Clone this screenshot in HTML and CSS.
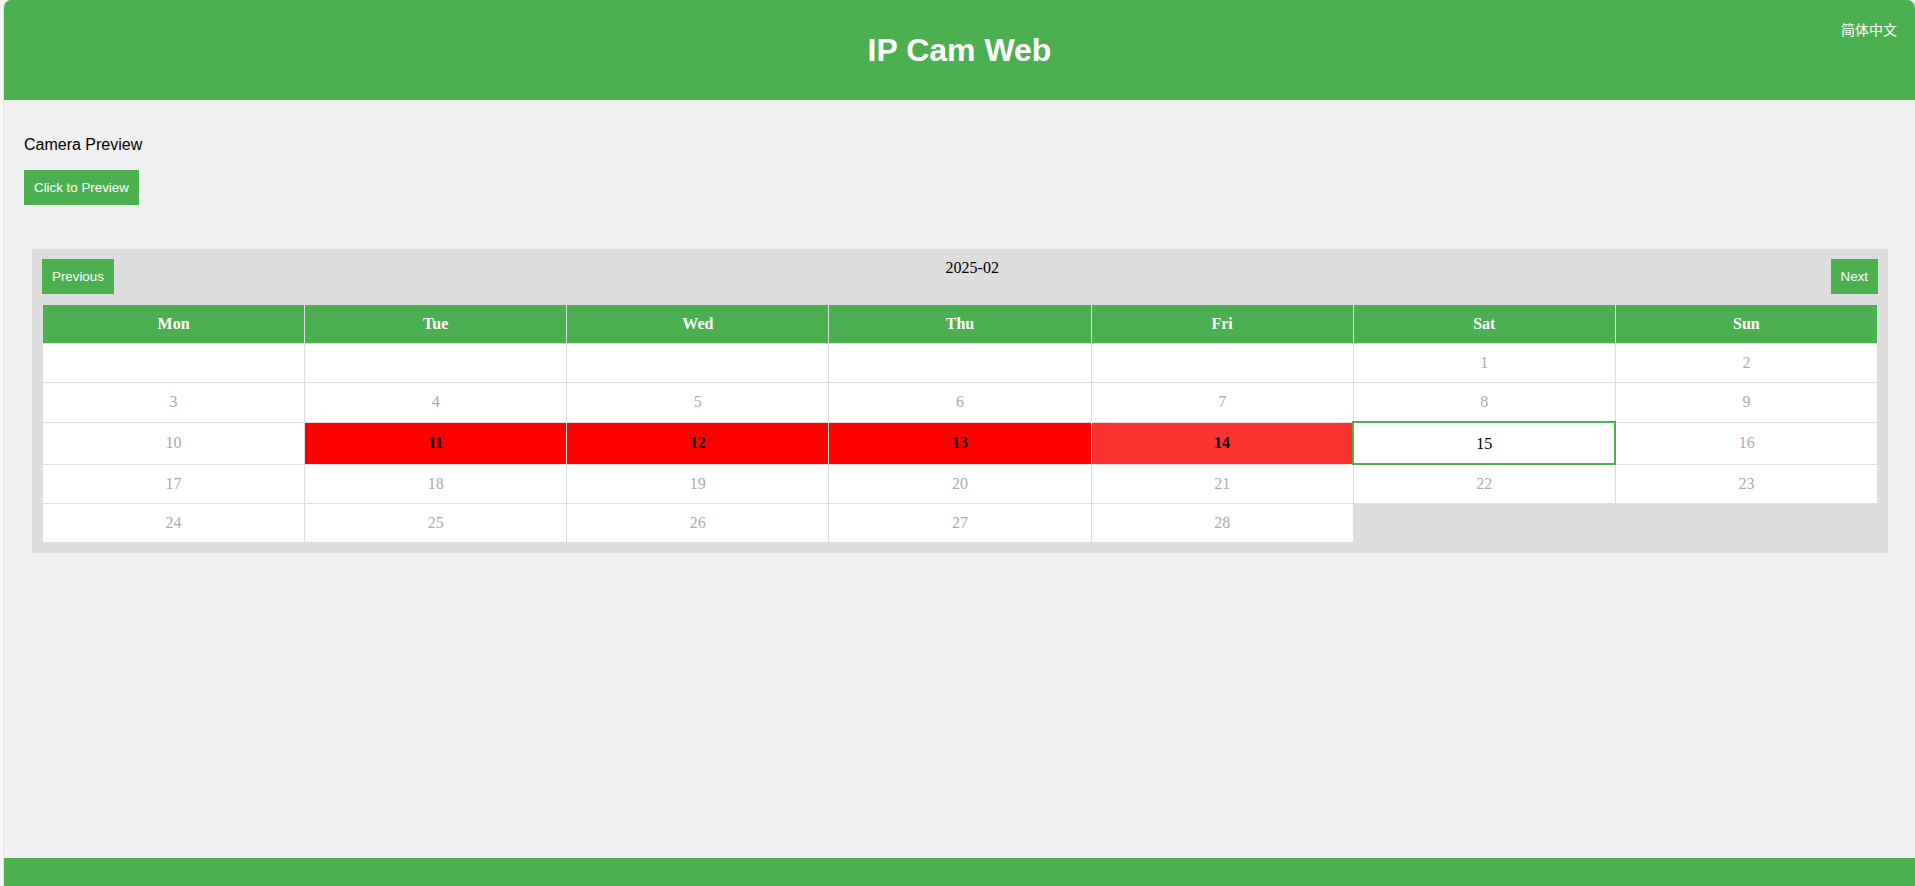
FILE: index.html
```html
<!DOCTYPE html>
<html lang="en">
<head>
<meta charset="utf-8">
<title>IP Cam Web</title>
<link rel="stylesheet" href="styles.css">
</head>
<body>
<div class="app">
  <header class="topbar">
    <h1 class="title">IP Cam Web</h1>
    <a class="lang">简体中文</a>
  </header>
  <main class="main">
    <p class="label">Camera Preview</p>
    <button class="btn">Click to Preview</button>
    <section class="calendar">
      <div class="cal-nav">
        <button class="btn">Previous</button>
        <span class="month">2025-02</span>
        <button class="btn">Next</button>
      </div>
      <table class="cal-table">
        <thead>
          <tr><th>Mon</th><th>Tue</th><th>Wed</th><th>Thu</th><th>Fri</th><th>Sat</th><th>Sun</th></tr>
        </thead>
        <tbody>
          <tr><td></td><td></td><td></td><td></td><td></td><td>1</td><td>2</td></tr>
          <tr><td>3</td><td>4</td><td>5</td><td>6</td><td>7</td><td>8</td><td>9</td></tr>
          <tr><td>10</td><td class="rec">11</td><td class="rec">12</td><td class="rec">13</td><td class="rec part">14</td><td class="today">15</td><td>16</td></tr>
          <tr><td>17</td><td>18</td><td>19</td><td>20</td><td>21</td><td>22</td><td>23</td></tr>
          <tr><td>24</td><td>25</td><td>26</td><td>27</td><td>28</td></tr>
        </tbody>
      </table>
    </section>
  </main>
  <footer class="footer"></footer>
</div>
</body>
</html>
```

FILE: styles.css
```css
html, body {
  margin: 0;
  padding: 0;
  height: 100%;
}
body {
  background: #f7f7f7;
  font-family: "Liberation Sans", Arial, sans-serif;
  overflow: hidden;
}
.app {
  margin-left: 3px;
  height: 886px;
  display: flex;
  flex-direction: column;
  background: #f0f0f0;
  border-radius: 8px 8px 0 0;
  border-left: 1px solid #e4e4e4;
  overflow: hidden;
}
.topbar {
  position: relative;
  height: 100px;
  flex: 0 0 100px;
  background: #4caf50;
  display: flex;
  align-items: center;
  justify-content: center;
}
.title {
  margin: 0;
  color: #fff;
  font-size: 32px;
  font-weight: bold;
  font-family: "Liberation Sans", Arial, sans-serif;
}
.lang {
  position: absolute;
  top: 19px;
  right: 18px;
  color: #fff;
  font-size: 14px;
  line-height: 20px;
  font-family: "Noto Sans CJK SC", "Liberation Sans", sans-serif;
  cursor: pointer;
}
.main {
  flex: 1;
  padding: 20px 20px 0 20px;
}
.label {
  margin: 16px 0 16px;
  font-size: 16px;
  line-height: 18px;
  color: #000;
}
.btn {
  background: #4caf50;
  color: #fff;
  border: none;
  padding: 10px;
  font-family: "Liberation Sans", Arial, sans-serif;
  font-size: 13.333px;
  line-height: 15px;
  cursor: pointer;
}
.calendar {
  margin: 44px 7px 0 8px;
  padding: 10px;
  background: #ddd;
}
.cal-nav {
  display: flex;
  justify-content: space-between;
  align-items: flex-start;
}
.month {
  font-family: "Liberation Serif", "Times New Roman", serif;
  font-size: 16px;
  line-height: 18px;
  color: #000;
}
.cal-table {
  width: 100%;
  margin-top: 10px;
  border-collapse: collapse;
  table-layout: fixed;
  font-family: "Liberation Serif", "Times New Roman", serif;
  font-size: 16px;
}
.cal-table th,
.cal-table td {
  border: 1px solid #ddd;
  padding: 10px;
  line-height: 18px;
  text-align: center;
}
.cal-table th {
  background: #4caf50;
  color: #fff;
  font-weight: bold;
}
.cal-table td {
  background: #fff;
  color: #aaa;
}
.cal-table td.rec {
  background: #ff0000;
  color: #000;
  font-weight: bold;
}
.cal-table td.part {
  background: #fa3232;
}
.cal-table td.today {
  border: 2px solid #4caf50;
  color: #000;
  padding-top: 12px;
}
.footer {
  flex: 0 0 28px;
  background: #4caf50;
}
```
